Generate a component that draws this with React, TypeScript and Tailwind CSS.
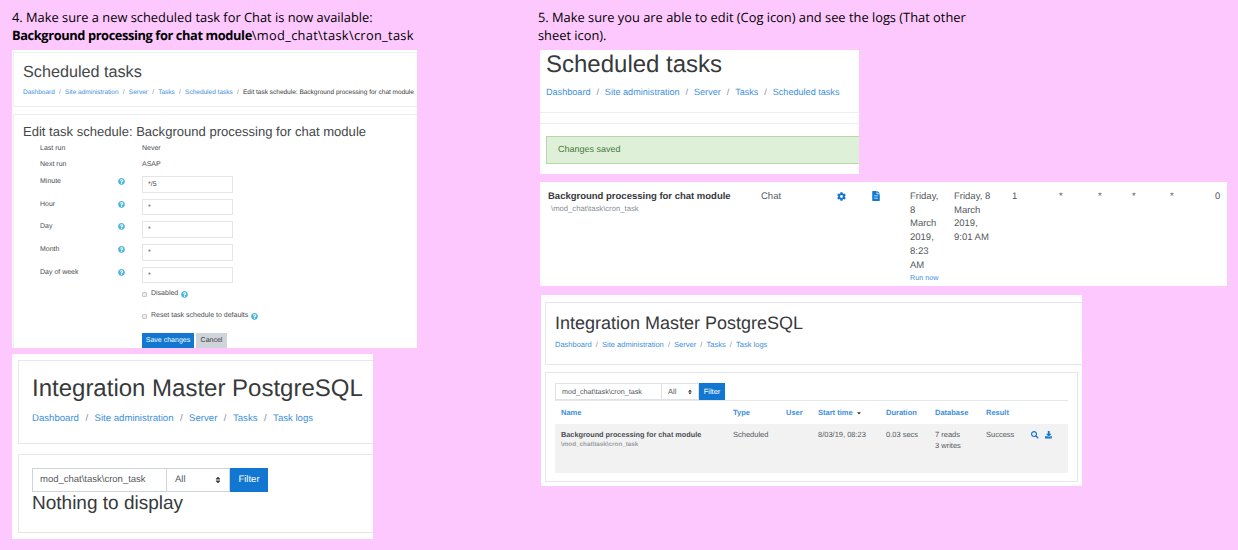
import { FaCaretDown, FaCog, FaDownload, FaFileAlt, FaQuestionCircle, FaSearch, FaSort } from "react-icons/fa";

const LINK = "text-[#3d8fdc]";

function Crumbs({ items, current, className, sep = "px-[0.65em]" }: { items: string[]; current?: string; className: string; sep?: string }) {
  return (
    <div className={`flex whitespace-nowrap ${className}`}>
      {items.map((item, i) => (
        <span key={item} className="flex">
          <span className={LINK}>{item}</span>
          {(i < items.length - 1 || current) && <span className={`text-[#868e96] ${sep}`}>/</span>}
        </span>
      ))}
      {current && <span className="text-[#373a3c]">{current}</span>}
    </div>
  );
}

function Help() {
  return <FaQuestionCircle className="text-[#4db8dc] text-[7px]" />;
}

function FormRow({ label, value }: { label: string; value: string }) {
  return (
    <div className="flex h-[22.7px] text-[7px]">
      <span className="w-[79px] pl-[1px] pt-[1px]">{label}</span>
      <span className="w-[24px] pt-[2px]"><Help /></span>
      <span className="w-[91px] h-[16.5px] border border-[#e3e6e8] bg-white pl-[5px] leading-[15px]">{value}</span>
    </div>
  );
}

function CheckRow({ label, className }: { label: string; className: string }) {
  return (
    <div className={`flex items-center gap-[3px] ml-[103px] text-[7px] ${className}`}>
      <span className="w-[5px] h-[5px] border border-[#c4c8cc] bg-[#eceef0] rounded-[1px] mr-[1px]" />
      <span>{label}</span>
      <Help />
    </div>
  );
}

function EditScreen() {
  return (
    <div className="h-[298px] w-[405px] bg-white overflow-hidden pt-[2px] pl-[1px] text-[#4a4e52]" >
      <div className="w-[420px] h-[55px] border border-[#eceeef] pl-[9px] pt-[9px]">
        <div className="text-[16.2px] leading-[20px] text-[#444749]">Scheduled tasks</div>
        <Crumbs
          className="text-[6.5px] mt-[6px] leading-[10px]"
          items={["Dashboard", "Site administration", "Server", "Tasks", "Scheduled tasks"]}
          current="Edit task schedule: Background processing for chat module"
        />
      </div>
      <div className="w-[420px] h-[240px] mt-[7px] border-l border-t border-[#eceeef] pl-[9px] pt-[8px]">
        <div className="text-[13.05px] leading-[17px] text-[#444749] whitespace-nowrap">Edit task schedule: Background processing for chat module</div>
        <div className="pl-[16px]">
          <div className="flex h-[16.5px] pt-[1px] text-[7px] items-center"><span className="w-[103px] pl-[1px]">Last run</span><span>Never</span></div>
          <div className="flex h-[16.5px] text-[7px] items-center"><span className="w-[103px] pl-[1px]">Next run</span><span>ASAP</span></div>
          <div className="mt-[3px]">
            <FormRow label="Minute" value="*/5" />
            <FormRow label="Hour" value="*" />
            <FormRow label="Day" value="*" />
            <FormRow label="Month" value="*" />
            <FormRow label="Day of week" value="*" />
          </div>
          <CheckRow label="Disabled" className="mt-[0px]" />
          <CheckRow label="Reset task schedule to defaults" className="mt-[11.5px]" />
          <div className="flex gap-[2px] ml-[103px] mt-[11px] text-[7px]">
            <span className="w-[52px] h-[16px] bg-[#1177d1] text-white flex items-center justify-center">Save changes</span>
            <span className="w-[31px] h-[16px] bg-[#ced4da] text-[#373a3c] flex items-center justify-center">Cancel</span>
          </div>
        </div>
      </div>
    </div>
  );
}

function LogsEmptyScreen() {
  return (
    <div className="h-[185px] w-[361px] mt-[6px] bg-white overflow-hidden pt-[6px] pl-[6px] text-[#373a3c]">
      <div className="w-[370px] h-[84px] border border-[#e5e7e9] pl-[13px] pt-[13px]">
        <div className="text-[24px] leading-[30px] whitespace-nowrap">Integration Master PostgreSQL</div>
        <Crumbs className="text-[9.6px] leading-[14px] mt-[8px]" sep="px-[0.675em]" items={["Dashboard", "Site administration", "Server", "Tasks", "Task logs"]} />
      </div>
      <div className="w-[370px] h-[79px] mt-[10px] border border-[#e5e7e9] pl-[13px] pt-[13px]">
        <div className="flex h-[24px] text-[9.5px]">
          <span className="w-[135px] border border-[#ced4da] pl-[7px] leading-[22px] text-[#55595c]">mod_chat\task\cron_task</span>
          <span className="w-[63px] border-y border-r border-[#ced4da] pl-[8px] pr-[7px] flex items-center justify-between text-[#55595c]">All<FaSort className="text-[8px] text-[#373a3c]" /></span>
          <span className="w-[38px] bg-[#1177d1] text-white flex items-center justify-center">Filter</span>
        </div>
        <div className="text-[19px] leading-[23px]">Nothing to display</div>
      </div>
    </div>
  );
}

function SavedScreen() {
  return (
    <div className="h-[124px] w-[319px] mt-[6px] ml-[2px] bg-white overflow-hidden pl-[6px] pt-[1px] text-[#373a3c]">
      <div className="text-[24px] leading-[28px]">Scheduled tasks</div>
      <Crumbs className="text-[9.1px] leading-[12px] mt-[7px]" items={["Dashboard", "Site administration", "Server", "Tasks", "Scheduled tasks"]} />
      <div className="-ml-[6px] h-[12px] mt-[14px] border-y border-[#eceeef]" />
      <div className="w-[330px] h-[28px] mt-[12px] bg-[#dff0d8] border border-[#b9d6a8] pl-[11px] text-[9px] leading-[25px] text-[#4d7a3f]">Changes saved</div>
      <div className="-ml-[6px] h-[10px] mt-[10px] border-t border-[#e5e7e9]" />
    </div>
  );
}

function TaskRow() {
  return (
    <div className="flex h-[104px] w-[687px] mt-[8px] ml-[2px] bg-white pl-[8px] pt-[8px] text-[9.5px] leading-[13.7px] text-[#55595c]">
      <div className="w-[213px]">
        <div className="font-bold text-[#373a3c] whitespace-nowrap">Background processing for chat module</div>
        <div className="text-[7.7px] leading-[9px] pl-[3px] text-[#868e96]">\mod_chat\task\cron_task</div>
      </div>
      <div className="w-[76px]">Chat</div>
      <div className="w-[34px] pt-[2px]"><FaCog className="text-[#1177d1] text-[9px]" /></div>
      <div className="w-[39px] pt-[1px]"><FaFileAlt className="text-[#1177d1] text-[10px]" /></div>
      <div className="w-[44px]">
        Friday,<br />8<br />March<br />2019,<br />8:23<br />AM
        <div className={`text-[7.2px] leading-[10px] mt-[1px] ${LINK}`}>Run now</div>
      </div>
      <div className="w-[58px]">Friday, 8<br />March<br />2019,<br />9:01 AM</div>
      <div className="w-[47px]">1</div>
      <div className="w-[39px]">*</div>
      <div className="w-[34px]">*</div>
      <div className="w-[38px]">*</div>
      <div className="w-[45px]">*</div>
      <div>0</div>
    </div>
  );
}

const logCols = [
  { name: "Name", w: "w-[172px]" },
  { name: "Type", w: "w-[53px]" },
  { name: "User", w: "w-[32px]" },
  { name: "Start time", w: "w-[68px]" },
  { name: "Duration", w: "w-[49px]" },
  { name: "Database", w: "w-[51px]" },
  { name: "Result", w: "w-[49px]" },
];

function LogsScreen() {
  return (
    <div className="h-[191px] w-[541px] mt-[9px] ml-[3px] bg-white overflow-hidden pt-[7px] pl-[4px] text-[#55595c]">
      <div className="w-[545px] h-[63px] border border-[#e5e7e9] pl-[9px] pt-[9px]">
        <div className="text-[18px] leading-[22px] text-[#373a3c] whitespace-nowrap">Integration Master PostgreSQL</div>
        <Crumbs className="text-[7.5px] leading-[10px] mt-[6px]" sep="px-[0.55em]" items={["Dashboard", "Site administration", "Server", "Tasks", "Task logs"]} />
      </div>
      <div className="w-[533px] h-[110px] mt-[7px] border border-[#e5e7e9] px-[9px] pt-[10px] text-[7.5px]">
        <div className="flex h-[18px] border-b border-[#e5e7e9]">
          <span className="w-[107px] border border-[#e0e3e6] pl-[6px] text-[7.2px] leading-[15px]">mod_chat\task\cron_task</span>
          <span className="w-[37px] border-y border-r border-[#e0e3e6] pl-[6px] pr-[5px] flex items-center justify-between">All<FaSort className="text-[6px] text-[#373a3c]" /></span>
          <span className="w-[26px] bg-[#1177d1] text-white flex items-center justify-center">Filter</span>
        </div>
        <div className="flex h-[23px] pl-[6px] items-center font-bold text-[#3d8fdc]">
          {logCols.map((c) => (
            <span key={c.name} className={`${c.w} flex items-center gap-[3px]`}>
              {c.name}
              {c.name === "Start time" && <FaCaretDown className="text-[6px] text-[#373a3c]" />}
            </span>
          ))}
        </div>
        <div className="flex h-[49px] bg-[#f2f2f2] pl-[6px] pt-[6px] leading-[10px]">
          <div className="w-[172px]">
            <div className="font-bold text-[7.3px] text-[#4a4e52] whitespace-nowrap">Background processing for chat module</div>
            <div className="text-[6.3px] font-bold text-[#9a9ea2]">\mod_chat\task\cron_task</div>
          </div>
          <div className="w-[53px]">Scheduled</div>
          <div className="w-[32px]" />
          <div className="w-[68px]">8/03/19, 08:23</div>
          <div className="w-[49px]">0.03 secs</div>
          <div className="w-[51px]">7 reads<div className="mt-[1px]">3 writes</div></div>
          <div className="w-[45px]">Success</div>
          <div className="flex gap-[6px] pt-[1px]">
            <FaSearch className="text-[#1177d1] text-[7.5px]" />
            <FaDownload className="text-[#1177d1] text-[7.5px]" />
          </div>
        </div>
      </div>
    </div>
  );
}

export default function App() {
  return (
    <div className="flex h-[550px] w-[1238px] overflow-hidden bg-[#fdc8fe] font-['Liberation_Sans',sans-serif] [text-rendering:geometricPrecision]">
      <div className="w-[526px] ml-[12px] pt-[8px]">
        <p className="font-['Open_Sans',sans-serif] text-[12.85px] leading-[18px] text-black whitespace-nowrap">
          4. Make sure a new scheduled task for Chat is now available:<br />
          <b className="tracking-[-0.4px]">Background processing for chat module</b><span className="tracking-[0.3px]">\mod_chat\task\cron_task</span>
        </p>
        <div className="mt-[6px]"><EditScreen /></div>
        <LogsEmptyScreen />
      </div>
      <div className="flex-1 pt-[8px]">
        <p className="font-['Open_Sans',sans-serif] text-[12.85px] leading-[18px] text-black whitespace-nowrap">
          5. Make sure you are able to edit (Cog icon) and see the logs (That other<br />
          sheet icon).
        </p>
        <SavedScreen />
        <TaskRow />
        <LogsScreen />
      </div>
    </div>
  );
}
